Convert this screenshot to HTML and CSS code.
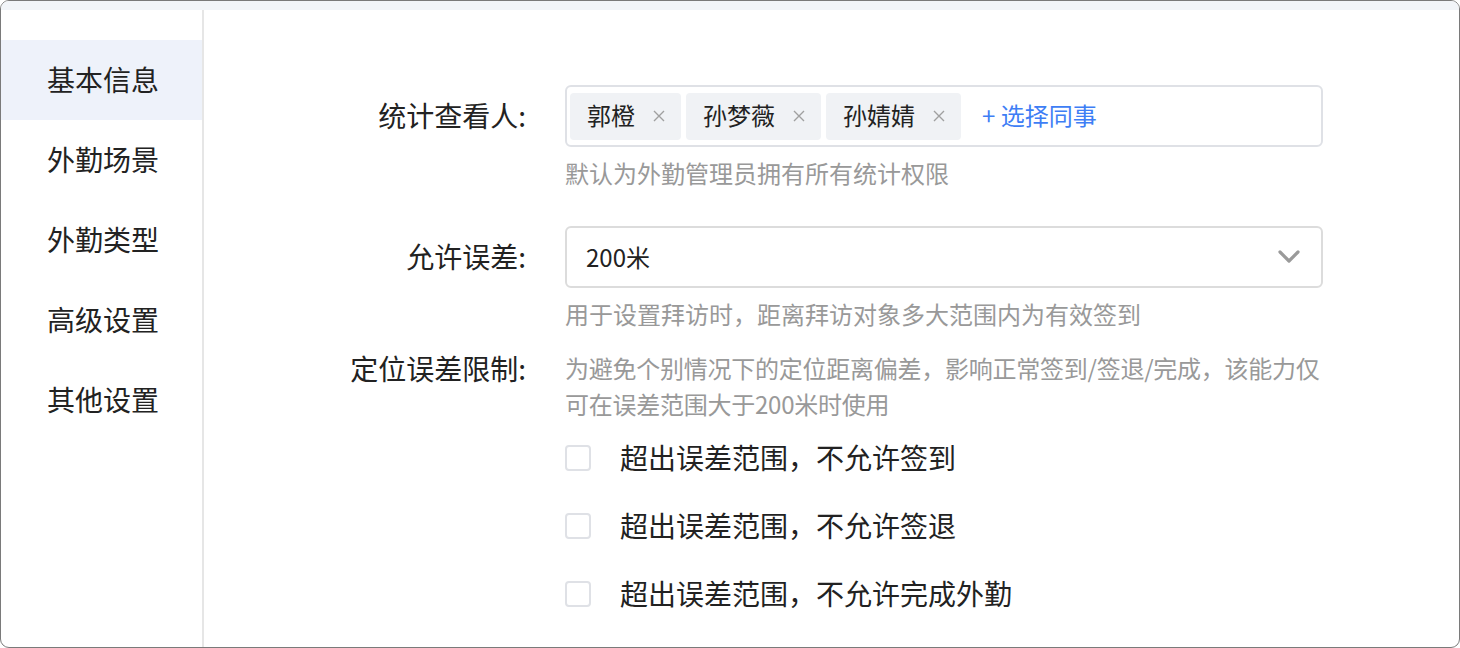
FILE: index.html
```html
<!DOCTYPE html>
<html lang="zh-CN">
<head>
<meta charset="utf-8">
<title>外勤设置</title>
<link rel="stylesheet" href="styles.css">
</head>
<body>
<div class="frame">
  <div class="topbar"></div>
  <div class="layout">
    <nav class="sidebar">
      <div class="nav-item active">基本信息</div>
      <div class="nav-item">外勤场景</div>
      <div class="nav-item">外勤类型</div>
      <div class="nav-item">高级设置</div>
      <div class="nav-item">其他设置</div>
    </nav>
    <main class="content">
      <div class="form">
        <div class="row">
          <div class="label">统计查看人:</div>
          <div class="field">
            <div class="tag-input">
              <span class="tag">郭橙<svg class="tag-close" width="12" height="12" viewBox="0 0 12 12"><path d="M1 1L11 11M11 1L1 11" stroke="#a0a0a0" stroke-width="1.4" fill="none"/></svg></span>
              <span class="tag">孙梦薇<svg class="tag-close" width="12" height="12" viewBox="0 0 12 12"><path d="M1 1L11 11M11 1L1 11" stroke="#a0a0a0" stroke-width="1.4" fill="none"/></svg></span>
              <span class="tag">孙婧婧<svg class="tag-close" width="12" height="12" viewBox="0 0 12 12"><path d="M1 1L11 11M11 1L1 11" stroke="#a0a0a0" stroke-width="1.4" fill="none"/></svg></span>
              <span class="add-link">+ 选择同事</span>
            </div>
            <div class="hint">默认为外勤管理员拥有所有统计权限</div>
          </div>
        </div>

        <div class="row row-gap">
          <div class="label">允许误差:</div>
          <div class="field">
            <div class="select">
              <span class="select-value">200米</span>
              <svg class="chevron" width="22" height="14" viewBox="0 0 22 14"><polyline points="2,2 11,11 20,2" fill="none" stroke="#9a9a9a" stroke-width="3.2" stroke-linecap="round" stroke-linejoin="round"/></svg>
            </div>
            <div class="hint">用于设置拜访时，距离拜访对象多大范围内为有效签到</div>
          </div>
        </div>

        <div class="row row-top">
          <div class="label label-text">定位误差限制:</div>
          <div class="field">
            <div class="desc">为避免个别情况下的定位距离偏差，影响正常签到/签退/完成，该能力仅可在误差范围大于200米时使用</div>
            <div class="checks">
              <label class="check"><span class="box"></span><span>超出误差范围，不允许签到</span></label>
              <label class="check"><span class="box"></span><span>超出误差范围，不允许签退</span></label>
              <label class="check"><span class="box"></span><span>超出误差范围，不允许完成外勤</span></label>
            </div>
          </div>
        </div>
      </div>
    </main>
  </div>
</div>
</body>
</html>
```

FILE: styles.css
```css
* { box-sizing: border-box; }
html, body { margin: 0; padding: 0; background: #ffffff; }
body {
  font-family: "Noto Sans CJK SC", "Liberation Sans", sans-serif;
  color: #222;
}
.frame {
  width: 1460px;
  height: 648px;
  border: 1px solid #7a7a7a;
  border-radius: 9px;
  overflow: hidden;
  display: flex;
  flex-direction: column;
  background: #fff;
}
.topbar {
  height: 9px;
  background: #f2f5f9;
  flex: none;
}
.layout {
  flex: 1;
  display: flex;
  min-height: 0;
}
.sidebar {
  width: 203px;
  flex: none;
  border-right: 2px solid #e6e6e6;
  padding-top: 30px;
}
.nav-item {
  height: 80px;
  display: flex;
  align-items: center;
  padding-left: 46px;
  padding-bottom: 3px;
  font-size: 28px;
  color: #222;
}
.nav-item.active { background: #eef2fa; }
.content {
  flex: 1;
  padding-top: 75px;
}
.form {
  display: flex;
  flex-direction: column;
}
.row {
  display: grid;
  grid-template-columns: 322px 758px;
  column-gap: 39px;
  align-items: start;
}
.row-gap { margin-top: 37px; }
.row-top { margin-top: 20px; }
.label {
  text-align: right;
  font-size: 28px;
  line-height: 60px;
  color: #222;
  white-space: nowrap;
}
.label-text { line-height: 36px; }
.field { display: flex; flex-direction: column; }
.tag-input {
  height: 62px;
  border: 2px solid #dfe1e6;
  border-radius: 6px;
  padding: 0 3px;
  display: flex;
  align-items: center;
  gap: 5px;
}
.tag {
  height: 47px;
  background: #f0f2f5;
  border-radius: 4px;
  padding: 0 16px 3px 17px;
  display: flex;
  align-items: center;
  font-size: 24px;
  color: #222;
}
.tag-close {
  margin-left: 18px;
  margin-top: 3px;
  flex: none;
}
.add-link {
  margin-left: 16px;
  padding-bottom: 3px;
  font-size: 24px;
  color: #3e7ef5;
}
.hint {
  margin-top: 10px;
  font-size: 24px;
  line-height: 32px;
  color: #999;
}
.select {
  height: 62px;
  flex: none;
  border: 2px solid #dcdcdc;
  border-radius: 6px;
  padding: 0 21px 2px 19px;
  display: flex;
  align-items: center;
  justify-content: space-between;
}
.select-value {
  font-size: 24px;
  color: #222;
}
.chevron { margin-top: 2px; }
.desc {
  font-size: 24px;
  line-height: 36px;
  color: #999;
  letter-spacing: -0.25px;
}
.checks {
  margin-top: 15px;
  display: flex;
  flex-direction: column;
  gap: 28px;
}
.check {
  height: 40px;
  display: flex;
  align-items: center;
  gap: 29px;
  font-size: 28px;
  color: #222;
}
.check .box { margin-top: 2px; }
.box {
  width: 26px;
  height: 26px;
  border: 2px solid #dfe1e6;
  border-radius: 4px;
  background: #fff;
  flex: none;
}
```
